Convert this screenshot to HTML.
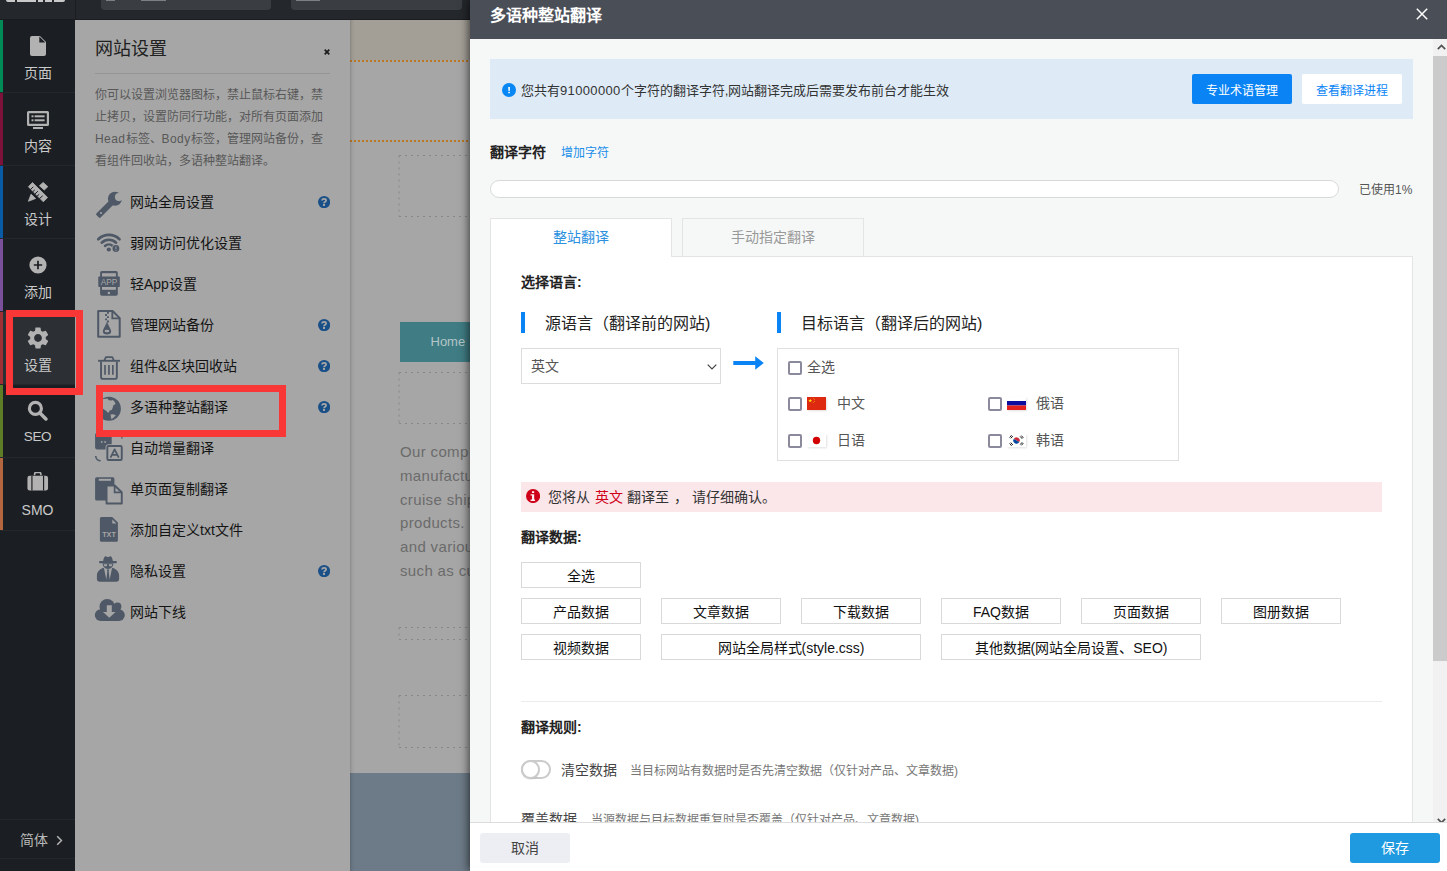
<!DOCTYPE html>
<html lang="zh-CN">
<head>
<meta charset="utf-8">
<title>多语种整站翻译</title>
<style>
*{box-sizing:border-box;margin:0;padding:0}
html,body{width:1447px;height:871px;overflow:hidden;background:#a6a6a6;font-family:"Liberation Sans",sans-serif;}
body{position:relative}
.abs{position:absolute}
/* ---------- top bar ---------- */
#topbar{position:absolute;left:0;top:0;width:1447px;height:20px;background:#24272b;border-bottom:1px solid #1a1c1f}
#topbar .logo{position:absolute;left:6px;top:0;width:59px;height:2px;background:#c9c9c9;border-radius:0 0 2px 2px}
#topbar .frag{position:absolute;top:0;height:1px;background:#8d9093;opacity:.8}
#topbar .sep{position:absolute;left:75px;top:0;width:1px;height:20px;background:#1b1d20}
#topbar .box{position:absolute;top:0;height:10px;background:#3a3e42;border-radius:0 0 4px 4px}
/* ---------- left nav ---------- */
#nav{position:absolute;left:0;top:20px;width:75px;height:851px;background:#1b1e22}
.nv{position:absolute;left:0;width:75px;height:73px;border-bottom:1px solid #24272b}
.nv i{position:absolute;left:0;top:0;width:3px;height:72px}
.nv span{position:absolute;left:0;width:75px;text-align:center;top:45px;font-size:14px;line-height:16px;color:#cacaca}
.nv svg{position:absolute}
/* ---------- settings panel ---------- */
#panel{position:absolute;left:75px;top:20px;width:275px;height:851px;background:#a6a6a6}
#panel h2{position:absolute;left:20px;top:18px;font-size:18px;line-height:22px;font-weight:normal;color:#212121}
#panel .x{position:absolute;left:249px;top:28.500px;width:6px;height:6px}
#panel .hr{position:absolute;left:20px;top:53px;width:235px;height:1px;background:#959595}
#panel p{position:absolute;left:20px;top:64px;width:240px;font-size:12px;line-height:22px;color:#585858;white-space:nowrap}
.red{position:absolute;border:5px solid #f93b3b;z-index:50}

#menu{position:absolute;left:0;top:0;width:0;height:0}
#menu b{position:absolute;left:130px;font-weight:normal;font-size:14px;line-height:18px;color:#141414;white-space:nowrap}
#menu svg{position:absolute}
/* ---------- page behind ---------- */
#page{position:absolute;left:350px;top:20px;width:130px;height:851px;background:#a6a6a6;overflow:hidden}
.dots{position:absolute;left:0;width:130px;height:2px;background:repeating-linear-gradient(90deg,#bb771f 0,#bb771f 2px,transparent 2px,transparent 4px)}
.dash{position:absolute;border:1px dashed #8b8b8b}
/* ---------- dialog ---------- */
#dlg{position:absolute;left:470px;top:0;width:977px;height:871px;background:#f6f8f8;box-shadow:-1px 0 9px rgba(0,0,0,.68)}
#dlg .hd{position:absolute;left:0;top:0;width:977px;height:39px;background:#4a4e57}
#dlg .hd b{position:absolute;left:20px;top:5px;font-size:16px;line-height:22px;color:#fff}
#dlg .ft{position:absolute;left:0;top:822px;width:977px;height:49px;background:#fff;border-top:1px solid #dcdcdc}

#dlg .info{position:absolute;left:20px;top:59px;width:923px;height:60px;background:#deebf7}
#dlg .it{position:absolute;left:31px;top:23px;font-size:13px;line-height:18px;color:#333;white-space:nowrap}
#dlg .b1{left:702px;top:15px;width:100px;height:30px;line-height:34px;overflow:hidden;background:#0a84f5;color:#fff;font-size:12px;border-radius:2px}
#dlg .b2{left:812px;top:15px;width:100px;height:30px;line-height:34px;overflow:hidden;background:#fff;color:#0a84f5;font-size:12px;border-radius:2px}
#dlg .lbl{position:absolute;font-size:14px;line-height:18px;font-weight:bold;color:#222;white-space:nowrap}
#dlg .lnk{position:absolute;font-size:12px;line-height:16px;color:#1a8fe8;white-space:nowrap}
#dlg .prog{position:absolute;left:20px;top:180px;width:849px;height:18px;border:1px solid #d9d9d9;border-radius:9px;background:#fff}
#dlg .used{position:absolute;left:889px;top:182px;font-size:12px;line-height:16px;color:#555;white-space:nowrap}
#dlg .pane{position:absolute;left:20px;top:256px;width:923px;height:580px;background:#fff;border:1px solid #e4e4e4}
#dlg .tab{position:absolute;top:218px;width:182px;height:39px;border:1px solid #e4e4e4;font-size:14px;line-height:37px;text-align:center}
#dlg .t1{left:20px;background:#fff;border-bottom:none;color:#2a90e0;height:39px}
#dlg .t2{left:212px;background:#f6f8f8;color:#999}
#dlg .bar{position:absolute;top:312px;width:4px;height:21px;background:#0a84f5}
#dlg .h3{position:absolute;top:314px;font-size:16px;line-height:20px;color:#222;white-space:nowrap}
#dlg .sel{position:absolute;left:51px;top:348px;width:200px;height:36px;border:1px solid #dcdcdc;background:#fff}
#dlg .sel span{position:absolute;left:9px;top:8px;font-size:14px;line-height:18px;color:#555}
#dlg .sel svg{position:absolute;left:185px;top:15px}
#dlg .tbox{position:absolute;left:307px;top:348px;width:402px;height:113px;border:1px solid #e0e0e0;background:#fff}
#dlg .cb{position:absolute;width:14px;height:14px;border:2px solid #8b8a9c;border-radius:2px;background:#fff}
#dlg .ct{position:absolute;font-size:14px;line-height:18px;color:#555;white-space:nowrap}
#dlg .fl{position:absolute;box-shadow:1px 1px 2px rgba(0,0,0,.12)}
#dlg .alert{position:absolute;left:51px;top:482px;width:861px;height:30px;background:#fbe6e9}
#dlg .at{position:absolute;left:27px;top:6px;font-size:14px;line-height:18px;color:#333;white-space:nowrap;word-spacing:.7px}
#dlg .at em{font-style:normal;color:#d0021b}
#dlg .db{position:absolute;height:26px;border:1px solid #d9d9d9;background:#fff;font-size:14px;line-height:26px;text-align:center;color:#111;white-space:nowrap}
#dlg .tog{position:absolute;left:51px;top:760px;width:30px;height:19px;border-radius:10px;border:2px solid #cbcbcb;background:#fff}
#dlg .tog i{position:absolute;left:-2px;top:-2px;width:19px;height:19px;border-radius:50%;border:2px solid #cbcbcb;background:#fff;box-shadow:0 1px 1px rgba(0,0,0,.08)}
#dlg .rt{position:absolute;font-size:14px;line-height:18px;color:#444;white-space:nowrap}
#dlg .rh{position:absolute;font-size:12px;line-height:16px;color:#777;white-space:nowrap}
#dlg .sb{position:absolute;left:963px;top:39px;width:14px;height:790px;background:#f1f1f1}
#dlg .sb .th{position:absolute;left:0;top:17px;width:14px;height:605px;background:#cbcbcb}
.btn{position:absolute;text-align:center;white-space:nowrap}
</style>
</head>
<body>
<!--TOPBAR+NAV-->
<div id="topbar">
  <div class="logo"></div><div style="position:absolute;left:15px;top:0;width:2px;height:2px;background:#24272b"></div><div style="position:absolute;left:36px;top:0;width:2px;height:2px;background:#24272b"></div><div style="position:absolute;left:43px;top:0;width:2px;height:2px;background:#24272b"></div><div style="position:absolute;left:52px;top:0;width:2px;height:2px;background:#24272b"></div>
  <div class="sep"></div>
  <div class="box" style="left:101px;width:170px"></div>
  <div class="box" style="left:291px;width:171px"></div>
  <div class="frag" style="left:106px;width:9px"></div><div class="frag" style="left:141px;width:25px"></div><div class="frag" style="left:296px;width:24px"></div>
</div>
<div id="nav">
  <!-- 页面 -->
  <div class="nv" style="top:0px"><i style="background:#008a55"></i>
    <svg style="left:30px;top:16px" width="16" height="20" viewBox="0 0 16 20"><path d="M2 0h8l6 6v12a2 2 0 0 1-2 2H2a2 2 0 0 1-2-2V2a2 2 0 0 1 2-2z" fill="#b2b2b2"/><path d="M9.3 0.6V6.6h6z" fill="#1b1e22"/><path d="M10.3 0.3l5.4 5.4h-5.4z" fill="#b2b2b2" opacity="0"/></svg>
    <span>页面</span></div>
  <!-- 内容 -->
  <div class="nv" style="top:73px"><i style="background:#7c1239"></i>
    <svg style="left:27px;top:18px" width="22" height="18" viewBox="0 0 22 18"><path d="M1.5 0h19A1.5 1.5 0 0 1 22 1.5v12a1.5 1.5 0 0 1-1.5 1.5h-19A1.5 1.5 0 0 1 0 13.500v-12A1.5 1.5 0 0 1 1.5 0zM2.200 2.200v10.600h17.600V2.200z" fill="#b2b2b2" fill-rule="evenodd"/><rect x="4.500" y="4.300" width="2" height="2" fill="#b2b2b2"/><rect x="7.600" y="4.300" width="10" height="2" fill="#b2b2b2"/><rect x="4.500" y="8.300" width="2" height="2" fill="#b2b2b2"/><rect x="7.600" y="8.300" width="10" height="2" fill="#b2b2b2"/><rect x="6" y="16" width="10" height="2" fill="#b2b2b2"/></svg>
    <span>内容</span></div>
  <!-- 设计 -->
  <div class="nv" style="top:146px"><i style="background:#0a5ba6"></i>
    <svg style="left:27px;top:15px" width="22" height="22" viewBox="0 0 22 22"><g fill="#b2b2b2" stroke="#b2b2b2" stroke-width=".8" stroke-linejoin="round"><path d="M1.400 5.700L5.500 1.600L20.600 16.500L16.300 20.800Z"/><path d="M16.150 1.400L20.800 5.650L17.250 9L12.450 4.750Z"/><path d="M4.050 13.200L8.600 17.500L1.400 20.250Z"/></g><path d="M3.640 8.420L6.030 6.030M5.850 10.630L7.500 9.150M8.050 12.830L10.630 10.440M10.260 15.040L11.900 13.570M12.650 17.430L15.400 15.040" stroke="#1b1e22" stroke-width="1" stroke-linecap="round"/></svg>
    <span>设计</span></div>
  <!-- 添加 -->
  <div class="nv" style="top:219px"><i style="background:#7a4f9c"></i>
    <svg style="left:29px;top:17px" width="18" height="18" viewBox="0 0 18 18"><circle cx="9" cy="9" r="8.600" fill="#b2b2b2"/><path d="M9 4.800v8.400M4.800 9h8.400" stroke="#1b1e22" stroke-width="1.700"/></svg>
    <span>添加</span></div>
  <!-- 设置 (active) -->
  <div class="nv" style="top:292px;background:#2c3034"><i style="background:#9e3035"></i>
    <svg style="left:25px;top:13px" width="26" height="26" viewBox="0 0 24 24"><path fill="#b2b2b2" d="M19.140 12.940c.040-.300.060-.610.060-.940 0-.320-.020-.640-.070-.940l2.030-1.580a.490.490 0 0 0 .12-.610l-1.920-3.320a.488.488 0 0 0-.590-.220l-2.390.960c-.500-.380-1.030-.700-1.620-.940l-.360-2.540a.484.484 0 0 0-.480-.410h-3.840c-.240 0-.430.170-.470.410l-.360 2.540c-.590.240-1.130.570-1.620.940l-2.390-.960c-.220-.080-.470 0-.590.220L2.740 8.870c-.120.210-.080.470.12.610l2.030 1.580c-.050.300-.090.630-.090.940s.020.640.070.940l-2.030 1.580a.490.490 0 0 0-.12.610l1.920 3.320c.12.220.370.290.590.220l2.390-.960c.500.380 1.030.700 1.620.940l.360 2.540c.050.240.240.410.480.410h3.840c.240 0 .440-.170.470-.410l.360-2.540c.590-.240 1.130-.560 1.620-.940l2.390.960c.220.080.470 0 .590-.220l1.920-3.320c.12-.220.070-.470-.12-.610l-2.010-1.580zM12 15.600c-1.980 0-3.600-1.620-3.600-3.600s1.620-3.600 3.600-3.600 3.600 1.620 3.600 3.600-1.620 3.600-3.600 3.600z"/></svg>
    <span>设置</span></div>
  <!-- SEO -->
  <div class="nv" style="top:365px"><i style="background:#5d7d26"></i>
    <svg style="left:27px;top:15px" width="21" height="21" viewBox="0 0 22 22"><circle cx="8.800" cy="8.800" r="6.300" fill="none" stroke="#b2b2b2" stroke-width="3.300"/><path d="M13.800 13.800l6 6" stroke="#b2b2b2" stroke-width="3.700" stroke-linecap="round"/></svg>
    <span style="top:43.500px;font-size:13.500px;letter-spacing:-0.4px">SEO</span></div>
  <!-- SMO -->
  <div class="nv" style="top:438px"><i style="background:#b4673f"></i>
    <svg style="left:27px;top:14px" width="21.500" height="20" viewBox="0 0 24 22"><path d="M8.500 3.500V2a1.600 1.600 0 0 1 1.600-1.600h3.800A1.600 1.600 0 0 1 15.500 2v1.500" fill="none" stroke="#b2b2b2" stroke-width="1.800"/><rect x="0.500" y="4" width="23" height="16.500" rx="2.600" fill="#b2b2b2"/><path d="M5.500 4v16.500M18.500 4v16.500" stroke="#1b1e22" stroke-width="1.300"/></svg>
    <span style="top:43.500px">SMO</span></div>
  <!-- language -->
  <div style="position:absolute;left:0;top:799px;width:75px;height:1px;background:#24272b"></div>
  <div style="position:absolute;left:0;top:838px;width:75px;height:1px;background:#24272b"></div>
  <div style="position:absolute;left:20px;top:812px;font-size:14px;line-height:16px;color:#b9b9b9">简体</div>
  <svg style="position:absolute;left:56px;top:815px" width="7" height="11" viewBox="0 0 7 11"><path d="M1.200 1.200l4.300 4.300-4.300 4.300" fill="none" stroke="#b9b9b9" stroke-width="1.400"/></svg>
</div>
<div class="red" style="left:6px;top:310px;width:77px;height:85px;border-width:7px;border-color:#fa3737"></div>

<!--PANEL-->
<div id="panel">
  <h2>网站设置</h2>
  <svg class="x" viewBox="0 0 6 6"><path d="M0.700 0.700l4.600 4.600M5.300 0.700L0.700 5.300" stroke="#1c1c1c" stroke-width="1.700"/></svg>
  <div class="hr"></div>
  <p>你可以设置浏览器图标，禁止鼠标右键，禁<br>止拷贝，设置防同行功能，对所有页面添加<br><span style="letter-spacing:.45px">Head</span>标签、<span style="letter-spacing:.45px">Body</span>标签，管理网站备份，查<br>看组件回收站，多语种整站翻译。</p>
</div>
<!-- menu: absolute page coordinates -->
<div id="menu">
  <b style="top:193px">网站全局设置</b>
  <b style="top:234px">弱网访问优化设置</b>
  <b style="top:275px">轻App设置</b>
  <b style="top:316px">管理网站备份</b>
  <b style="top:357px">组件&amp;区块回收站</b>
  <b style="top:398px">多语种整站翻译</b>
  <b style="top:439px">自动增量翻译</b>
  <b style="top:480px">单页面复制翻译</b>
  <b style="top:521px">添加自定义txt文件</b>
  <b style="top:562px">隐私设置</b>
  <b style="top:603px">网站下线</b>
  <svg style="left:318px;top:196px" width="12.200" height="12.200" viewBox="0 0 12.200 12.200"><circle cx="6.100" cy="6.100" r="6.100" fill="#1a5088"/><path d="M3.950 4.500C4.050 3.300 4.900 2.950 6.050 2.950C7.400 2.950 8.150 3.600 8.150 4.550C8.150 5.750 6 5.600 6 7.150" fill="none" stroke="#a6a6a6" stroke-width="1.700"/><rect x="5" y="7.950" width="2" height="2" fill="#a6a6a6"/></svg><svg style="left:318px;top:319px" width="12.200" height="12.200" viewBox="0 0 12.200 12.200"><circle cx="6.100" cy="6.100" r="6.100" fill="#1a5088"/><path d="M3.950 4.500C4.050 3.300 4.900 2.950 6.050 2.950C7.400 2.950 8.150 3.600 8.150 4.550C8.150 5.750 6 5.600 6 7.150" fill="none" stroke="#a6a6a6" stroke-width="1.700"/><rect x="5" y="7.950" width="2" height="2" fill="#a6a6a6"/></svg><svg style="left:318px;top:360px" width="12.200" height="12.200" viewBox="0 0 12.200 12.200"><circle cx="6.100" cy="6.100" r="6.100" fill="#1a5088"/><path d="M3.950 4.500C4.050 3.300 4.900 2.950 6.050 2.950C7.400 2.950 8.150 3.600 8.150 4.550C8.150 5.750 6 5.600 6 7.150" fill="none" stroke="#a6a6a6" stroke-width="1.700"/><rect x="5" y="7.950" width="2" height="2" fill="#a6a6a6"/></svg><svg style="left:318px;top:401px" width="12.200" height="12.200" viewBox="0 0 12.200 12.200"><circle cx="6.100" cy="6.100" r="6.100" fill="#1a5088"/><path d="M3.950 4.500C4.050 3.300 4.900 2.950 6.050 2.950C7.400 2.950 8.150 3.600 8.150 4.550C8.150 5.750 6 5.600 6 7.150" fill="none" stroke="#a6a6a6" stroke-width="1.700"/><rect x="5" y="7.950" width="2" height="2" fill="#a6a6a6"/></svg><svg style="left:318px;top:565px" width="12.200" height="12.200" viewBox="0 0 12.200 12.200"><circle cx="6.100" cy="6.100" r="6.100" fill="#1a5088"/><path d="M3.950 4.500C4.050 3.300 4.900 2.950 6.050 2.950C7.400 2.950 8.150 3.600 8.150 4.550C8.150 5.750 6 5.600 6 7.150" fill="none" stroke="#a6a6a6" stroke-width="1.700"/><rect x="5" y="7.950" width="2" height="2" fill="#a6a6a6"/></svg>
  <svg id="mic" style="left:0;top:0" width="350" height="871" viewBox="0 0 350 871">
  <g fill="#4e5866">
    <!-- 1 wrench -->
    <rect x="-10.400" y="-2.950" width="20.800" height="5.900" rx="1.200" transform="translate(105 209) rotate(-45)"/>
    <circle cx="114.950" cy="198.750" r="7.050"/>
    <circle cx="119" cy="197.100" r="4.100" fill="#a6a6a6"/>
    <circle cx="101" cy="213" r="1.050" fill="#a6a6a6"/>
    <!-- 2 wifi -->
    <g fill="none" stroke="#4e5866" stroke-linecap="round">
      <path d="M98.300 239.200A15.300 15.300 0 0 1 119.500 239.200" stroke-width="2.700"/>
      <path d="M101.700 242.700A10.400 10.400 0 0 1 116.100 242.700" stroke-width="2.600"/>
      <path d="M105 246A5.700 5.700 0 0 1 112.800 246" stroke-width="2.500"/>
    </g>
    <circle cx="108.800" cy="249.500" r="2.100"/>
    <circle cx="115.900" cy="248.500" r="4.300" fill="#a6a6a6"/>
    <circle cx="115.900" cy="248.500" r="3.400"/>
    <rect x="115.200" y="246.200" width="1.400" height="3" rx=".6" fill="#838a94"/><rect x="115.200" y="249.800" width="1.400" height="1.200" rx=".5" fill="#838a94"/>
    <!-- 3 app phone -->
    <rect x="100.100" y="271" width="17.700" height="24.700" rx="1.800"/>
    <rect x="102" y="273.200" width="13.900" height="16.600" fill="#a6a6a6"/>
    <rect x="98.300" y="276.500" width="21.500" height="10.500" rx=".8"/>
    <circle cx="108.900" cy="292.900" r="1.250" fill="#a6a6a6"/>
    <text x="109.050" y="284.700" text-anchor="middle" font-family="Liberation Sans, sans-serif" font-size="8.200" fill="#a6a6a6" textLength="16.600" lengthAdjust="spacingAndGlyphs">APP</text>
    <!-- 4 zip -->
    <path d="M98.200 311H112.600L119.700 318.100V336.800H98.200Z" fill="none" stroke="#4e5866" stroke-width="2" stroke-linejoin="round"/>
    <path d="M112.300 311V318.400H119.700" fill="none" stroke="#4e5866" stroke-width="1.800"/>
    <path d="M107 311.800h1.900v1.900H107zM105.100 314h1.900v1.900h-1.900zM107 316.200h1.900v1.900H107zM105.100 318.400h1.900v1.900h-1.900zM107 320.600h1.900v1.900H107z"/>
    <path d="M107 321.400C106.100 324.600 102.800 329.400 102.800 331.200a4.200 3.300 0 0 0 8.400 0C111.200 329.400 107.900 324.600 107 321.400Z"/>
    <ellipse cx="107" cy="331" rx="2.350" ry="1.200" fill="#a6a6a6"/>
    <!-- 5 trash -->
    <g fill="none" stroke="#4e5866">
      <path d="M98.100 360.800H120" stroke-width="1.900"/>
      <path d="M104.400 360.400L105.900 357.100H112.300L113.800 360.400" stroke-width="1.800" stroke-linejoin="round"/>
      <path d="M101.050 361.500V376.900a2 2 0 0 0 2 2H114.850a2 2 0 0 0 2-2V361.500" stroke-width="1.900"/>
      <path d="M105 365.100V374.800M108.950 365.100V374.800M112.850 365.100V374.800" stroke-width="1.650"/>
    </g>
    <!-- 6 globe -->
    <circle cx="108.900" cy="408.800" r="12"/>
    <path d="M102 399.300L107.400 398.500L108.800 400.200L111.300 400.600L112.600 399.900L114.300 401.200L115.600 403.900L113.400 405.300L112.700 407.800L111.800 409.900L109.600 410.500L109 412.400L107.600 412.500L106.300 410.900L102 408Z" fill="#a6a6a6"/>
    <path d="M110.500 414.500L113 414.200L115.900 415.300L113.700 417.400L111.500 419.300L110.900 417Z" fill="#a6a6a6"/>
    <!-- 7 auto translate -->
    <rect x="95.100" y="433" width="16.600" height="16.400" rx="1.800"/>
    <rect x="100.900" y="441.200" width="1.600" height="1.600" fill="#a6a6a6"/><rect x="104.300" y="441.200" width="1.600" height="1.600" fill="#a6a6a6"/>
    <rect x="107.350" y="445.950" width="14.400" height="14" rx="1.300" fill="#a6a6a6" stroke="#a6a6a6" stroke-width="3.600"/>
    <rect x="107.350" y="445.950" width="14.400" height="14" rx="1.300" fill="#a6a6a6" stroke="#4e5866" stroke-width="1.900"/>
    <path d="M110.500 457.600L114.600 449.300L118.800 457.600M111.900 454.900H117.300" fill="none" stroke="#4e5866" stroke-width="1.700" stroke-linejoin="round"/>
    <path d="M95.700 456A4.900 4.900 0 0 0 100.600 460.700" fill="none" stroke="#4e5866" stroke-width="1.600"/>
    <circle cx="121.900" cy="437.900" r=".8"/>
    <!-- 8 copy -->
    <rect x="95.100" y="477.200" width="19.300" height="23.400" rx="1.500"/>
    <rect x="98.800" y="478.800" width="12.200" height="2" fill="#a6a6a6"/>
    <path d="M106.550 485.450H114.700L121.750 492.300V503.550H106.550Z" fill="#a6a6a6" stroke="#4e5866" stroke-width="1.900" stroke-linejoin="round"/>
    <path d="M114.600 485.600V492.400H121.600" fill="none" stroke="#4e5866" stroke-width="1.700"/>
    <!-- 9 txt -->
    <path d="M101.400 516.900H112.200L117.900 522.600V540.200a1.500 1.500 0 0 1-1.500 1.500H101.400a1.500 1.500 0 0 1-1.500-1.500V518.400a1.500 1.500 0 0 1 1.500-1.500Z"/>
    <path d="M112.300 519.400V523.600H116.400Z" fill="#a6a6a6"/>
    <text x="109" y="536.900" text-anchor="middle" font-family="Liberation Sans, sans-serif" font-size="6.700" font-weight="bold" fill="#a6a6a6" textLength="13.600" lengthAdjust="spacingAndGlyphs">TXT</text>
    <!-- 10 spy -->
    <path d="M103.100 561.800C103.300 559.400 104 556.800 105 556.400 106 556.100 106.900 557.100 108 557.100S110 556.100 111 556.400C112 556.800 112.700 559.400 112.900 561.800Z"/>
    <rect x="99" y="561.100" width="17.900" height="2.100" rx="1"/>
    <path d="M102.600 563.200H113.400C113.400 566.300 111.100 568.900 108 568.900S102.600 566.300 102.600 563.200Z"/>
    <path d="M103.600 564.200H107.200L106.800 566.200H104.400ZM108.800 564.200H112.400L111.600 566.200H109.200Z" fill="#a6a6a6"/>
    <path d="M103.900 567.700C99.900 568.700 96.900 571.600 96.900 575.600V579.300A2.400 2.400 0 0 0 99.300 581.700H116.700A2.400 2.400 0 0 0 119.100 579.300V575.600C119.100 571.600 116.100 568.700 112.100 567.700L109.600 580L108 572.500L106.400 580Z"/>
    <path d="M106.800 569.600H109.200L108.700 571.300L109.500 578.600L108 580.600L106.500 578.600L107.300 571.300Z"/>
    <!-- 11 cloud -->
    <circle cx="107.200" cy="606.700" r="7.700"/><circle cx="117.500" cy="606.400" r="3.900"/>
    <rect x="94.800" y="609.200" width="30" height="11.800" rx="5.900"/>
    <rect x="100" y="606" width="19" height="8"/>
    <path d="M106.800 605.200H111.800V612H115.600L109.300 617.700L103 612H106.800Z" fill="#a6a6a6"/>
  </g>
  </svg>
</div>
<div class="red" style="left:96px;top:385px;width:190px;height:52px;border-width:7px;border-color:#fa3737"></div>

<!--PAGE-->
<div id="page">
  <div style="position:absolute;left:0;top:0;width:130px;height:40px;background:#a39f97"></div>
  <div class="dots" style="top:40px"></div>
  <div class="dots" style="top:120px"></div>
  <svg style="position:absolute;left:0;top:0" width="130" height="851" viewBox="0 0 130 851"><path d="M49 135.5H130 M49 196.5H130 M49 135.5V196.5 M49 352.5H130 M49 403.5H130 M49 352.5V403.5 M49 607.5H130 M49 619.5H130 M49 607.5V619.5 M49 675.5H130 M49 727.5H130 M49 675.5V727.5" fill="none" stroke="#878787" stroke-width="1" stroke-dasharray="2 4"/></svg>
  <div style="position:absolute;left:50px;top:302px;width:100px;height:40px;background:#3f7c83;color:#b4c6c8;font-size:13px;line-height:40px;padding-left:30.500px">Home</div>
  <div style="position:absolute;left:50px;top:420px;font-size:15px;line-height:23.800px;color:#6b6b6b;white-space:nowrap;letter-spacing:.35px">Our comp<br>manufactur<br>cruise ship<br>products.<br>and variou<br>such as cu</div>
  <div style="position:absolute;left:0;top:753px;width:130px;height:98px;background:#6d7b88"></div>
  <div style="position:absolute;left:0;top:0;width:5px;height:851px;background:linear-gradient(90deg,rgba(0,0,0,.16),rgba(0,0,0,.05) 40%,rgba(0,0,0,0))"></div>
</div>

<!--DIALOG-->
<div id="dlg">
  <div class="hd"><b>多语种整站翻译</b>
    <svg style="position:absolute;left:946px;top:8px" width="12" height="12" viewBox="0 0 12 12"><path d="M0.800 0.800l10.400 10.400M11.200 0.800L0.800 11.200" stroke="#fff" stroke-width="1.500"/></svg>
  </div>
  <!-- info bar -->
  <div class="info">
    <svg style="position:absolute;left:12px;top:24px" width="14" height="14" viewBox="0 0 14 14"><circle cx="7" cy="7" r="7" fill="#0887f5"/><path d="M6.100 4h2l-.35 4.300h-1.300z" fill="#eaf4fe"/><rect x="6.150" y="9" width="1.900" height="1.150" rx=".3" fill="#eaf4fe"/></svg>
    <span class="it">您共有<span style="letter-spacing:.35px">91000000</span>个字符的翻译字符,网站翻译完成后需要发布前台才能生效</span>
    <div class="btn b1">专业术语管理</div>
    <div class="btn b2">查看翻译进程</div>
  </div>
  <div class="lbl" style="left:20px;top:143px">翻译字符</div>
  <div class="lnk" style="left:91px;top:145px">增加字符</div>
  <div class="prog"></div>
  <div class="used">已使用1%</div>
  <!-- tabs -->
  <div class="pane"></div>
  <div class="tab t2">手动指定翻译</div>
  <div class="tab t1">整站翻译</div>
  <div class="lbl" style="left:51px;top:273px">选择语言:</div>
  <i class="bar" style="left:51px"></i><div class="h3" style="left:75px">源语言（翻译前的网站)</div>
  <i class="bar" style="left:307px"></i><div class="h3" style="left:331px">目标语言（翻译后的网站)</div>
  <div class="sel"><span>英文</span><svg width="10" height="6" viewBox="0 0 10 6"><path d="M0.700 0.700L5 5l4.300-4.300" fill="none" stroke="#444" stroke-width="1.200"/></svg></div>
  <svg style="position:absolute;left:263px;top:356px" width="31" height="14" viewBox="0 0 31 14"><path d="M0.300 5.100h21.900V0.300l8.600 6.700-8.600 6.700V8.900H0.300z" fill="#0a84f5"/></svg>
  <div class="tbox"><div style="position:absolute;left:-1px;top:-1px">
    <i class="cb" style="left:11px;top:13px"></i><span class="ct" style="left:30px;top:10px">全选</span>
    <i class="cb" style="left:11px;top:49px"></i>
    <svg class="fl" style="left:30px;top:49px" width="19" height="13" viewBox="0 0 19 13"><rect width="19" height="13" fill="#de2910"/><path d="M3.200 1.600l.5 1.400h1.400l-1.100.9.400 1.400-1.200-.9-1.200.9.400-1.400-1.100-.9h1.400z" fill="#ffde00"/><circle cx="6.300" cy="1.400" r=".45" fill="#ffde00"/><circle cx="7.400" cy="2.600" r=".45" fill="#ffde00"/><circle cx="7.400" cy="4.200" r=".45" fill="#ffde00"/><circle cx="6.300" cy="5.400" r=".45" fill="#ffde00"/></svg>
    <span class="ct" style="left:60px;top:46px">中文</span>
    <i class="cb" style="left:211px;top:49px"></i>
    <svg class="fl" style="left:230px;top:49px" width="19" height="13" viewBox="0 0 19 13"><rect width="19" height="13" fill="#fff"/><rect y="4" width="19" height="4.500" fill="#0c0c9e"/><rect y="8.500" width="19" height="4.500" fill="#e2201c"/></svg>
    <span class="ct" style="left:259px;top:46px">俄语</span>
    <i class="cb" style="left:11px;top:86px"></i>
    <svg class="fl" style="left:30px;top:86px" width="19" height="13" viewBox="0 0 19 13"><rect width="19" height="13" fill="#fff"/><circle cx="9.500" cy="6.500" r="3.700" fill="#d30000"/></svg>
    <span class="ct" style="left:60px;top:83px">日语</span>
    <i class="cb" style="left:211px;top:86px"></i>
    <svg class="fl" style="left:230px;top:86px" width="19" height="13" viewBox="0 0 19 13"><rect width="19" height="13" fill="#fff"/><path d="M6.300 6.500a3.200 3.200 0 0 1 6.400 0z" fill="#cd2e3a" transform="rotate(30 9.500 6.500)"/><path d="M6.300 6.500a3.200 3.200 0 0 0 6.400 0z" fill="#0047a0" transform="rotate(30 9.500 6.500)"/><g stroke="#222" stroke-width="1"><path d="M2.600 3.600l2-2.400M3.800 4.400l2-2.400"/><path d="M13.200 10.600l2-2.400M14.400 11.400l2-2.400"/><path d="M13.200 2.400l2 2.400M14.400 1.600l2 2.400"/><path d="M2.600 9.400l2 2.400M3.800 8.600l2 2.400"/></g></svg>
    <span class="ct" style="left:259px;top:83px">韩语</span>
  </div></div>
  <!-- alert -->
  <div class="alert"><svg style="position:absolute;left:5px;top:7px" width="14.100" height="14.100" viewBox="0 0 14.100 14.100"><circle cx="7.050" cy="7.050" r="7.050" fill="#cf0019"/><path d="M6 2.150h2.200v1.750H6zM4.600 5.200h3.600v5.400h.85v1.450H4.600v-1.450H6V6.550H4.600z" fill="#fdeef0"/></svg><span class="at">您将从 <em>英文</em> 翻译至 ， 请仔细确认。</span></div>
  <div class="lbl" style="left:51px;top:528px">翻译数据:</div>
  <div class="db" style="left:51px;top:562px;width:120px">全选</div>
  <div class="db" style="left:51px;top:598px;width:120px">产品数据</div>
  <div class="db" style="left:191px;top:598px;width:120px">文章数据</div>
  <div class="db" style="left:331px;top:598px;width:120px">下载数据</div>
  <div class="db" style="left:471px;top:598px;width:120px">FAQ数据</div>
  <div class="db" style="left:611px;top:598px;width:120px">页面数据</div>
  <div class="db" style="left:751px;top:598px;width:120px">图册数据</div>
  <div class="db" style="left:51px;top:634px;width:120px">视频数据</div>
  <div class="db" style="left:191px;top:634px;width:260px">网站全局样式(style.css)</div>
  <div class="db" style="left:471px;top:634px;width:260px">其他数据(网站全局设置、SEO)</div>
  <div style="position:absolute;left:51px;top:701px;width:861px;height:1px;background:#ececec"></div>
  <div class="lbl" style="left:51px;top:718px">翻译规则:</div>
  <div class="tog"><i></i></div>
  <div class="rt" style="left:91px;top:761px">清空数据</div>
  <div class="rh" style="left:160px;top:763px">当目标网站有数据时是否先清空数据（仅针对产品、文章数据)</div>
  <div class="rt" style="left:51px;top:810px">覆盖数据</div>
  <div class="rh" style="left:121px;top:812px">当源数据与目标数据重复时是否覆盖（仅针对产品、文章数据)</div>
  <!-- scrollbar -->
  <div class="sb"><div class="th"></div>
    <svg style="position:absolute;left:4px;top:5px" width="9" height="6" viewBox="0 0 9 6"><path d="M0.800 5.200L4.500 1.500l3.700 3.700" fill="none" stroke="#505050" stroke-width="1.700"/></svg>
    <svg style="position:absolute;left:4px;top:779px" width="9" height="6" viewBox="0 0 9 6"><path d="M0.800 0.800L4.500 4.500l3.700-3.700" fill="none" stroke="#505050" stroke-width="1.700"/></svg>
  </div>
  <!-- footer -->
  <div class="ft">
    <div class="btn" style="left:10px;top:10px;width:90px;height:30px;line-height:30px;background:#eceef3;border-radius:3px;font-size:14px;color:#444">取消</div>
    <div class="btn" style="left:880px;top:10px;width:90px;height:30px;line-height:30px;background:#1f9ae0;border-radius:3px;font-size:14px;color:#fff">保存</div>
  </div>
</div>

</body>
</html>
